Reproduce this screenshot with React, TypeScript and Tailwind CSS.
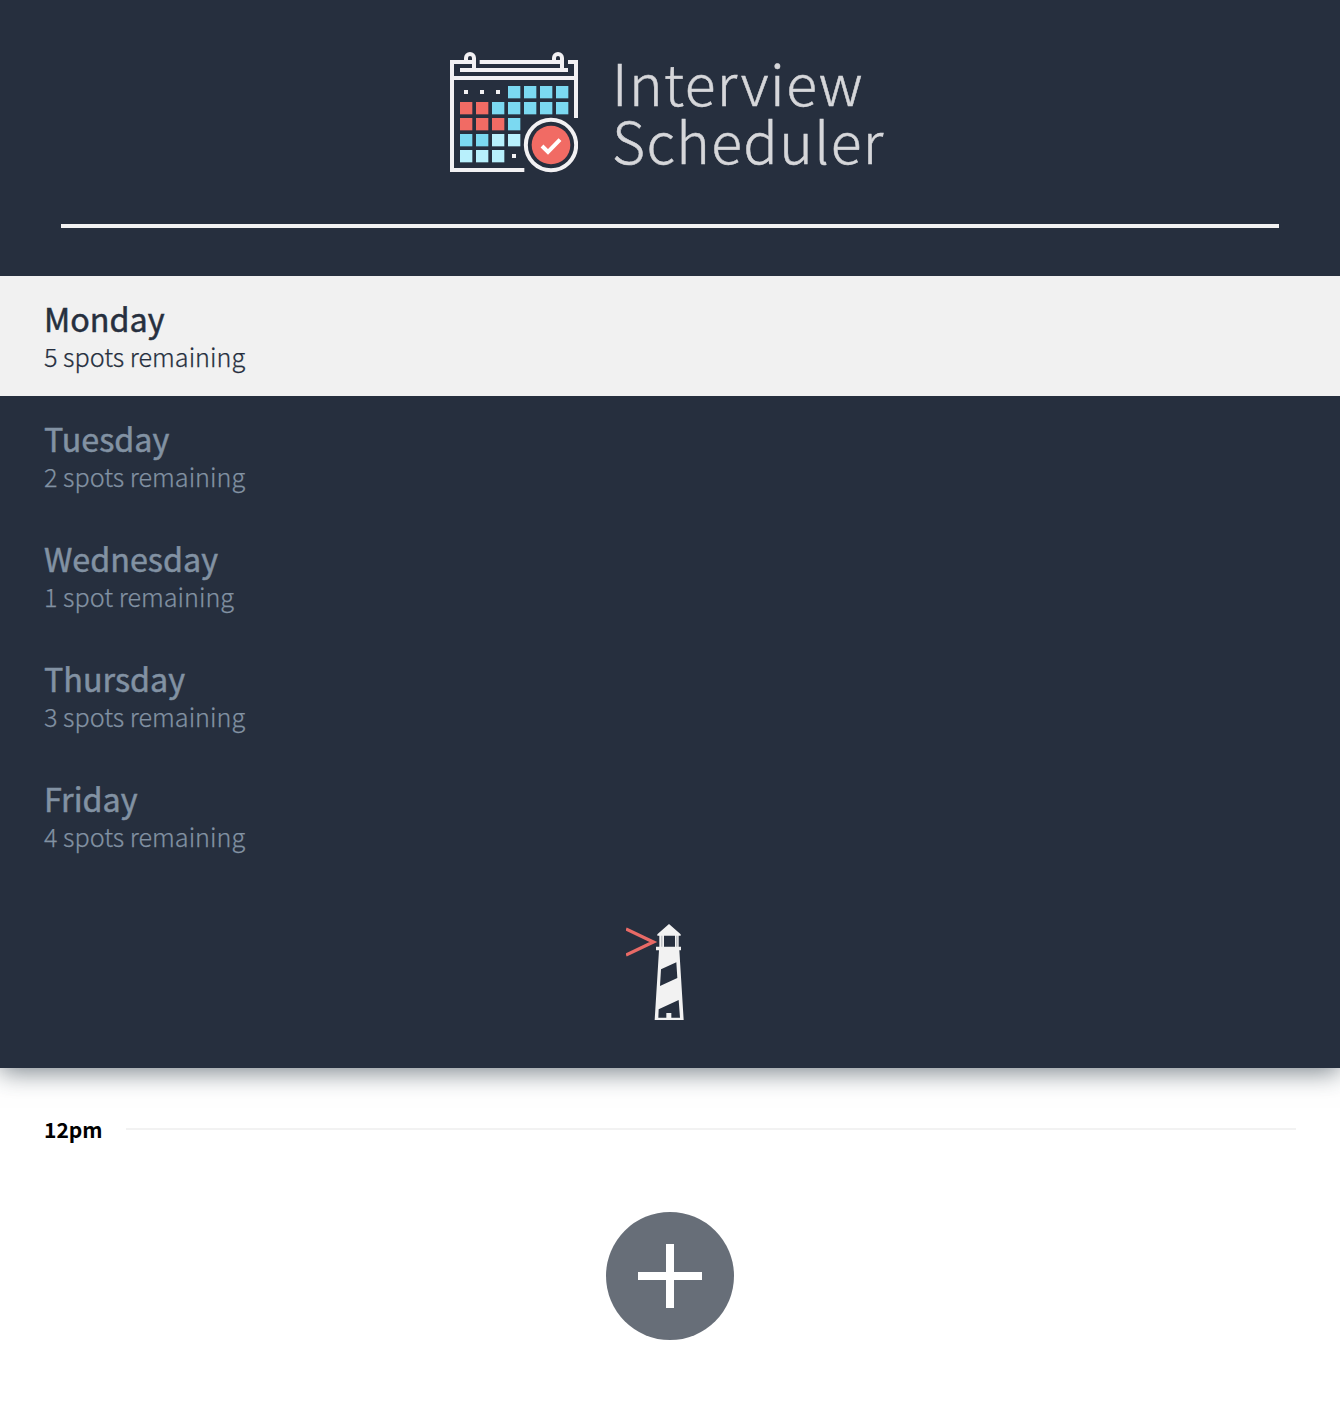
import React from "react";

const squares: [number, number, string][] = [
  [3, 0, "#7bd9f1"], [4, 0, "#7bd9f1"], [5, 0, "#7bd9f1"], [6, 0, "#7bd9f1"],
  [0, 1, "#f16b64"], [1, 1, "#f16b64"], [2, 1, "#7bd9f1"], [3, 1, "#7bd9f1"], [4, 1, "#7bd9f1"], [5, 1, "#7bd9f1"], [6, 1, "#7bd9f1"],
  [0, 2, "#f16b64"], [1, 2, "#f16b64"], [2, 2, "#f16b64"], [3, 2, "#7bd9f1"],
  [0, 3, "#7bd9f1"], [1, 3, "#7bd9f1"], [2, 3, "#b8f0fc"], [3, 3, "#b8f0fc"],
  [0, 4, "#b8f0fc"], [1, 4, "#b8f0fc"], [2, 4, "#b8f0fc"],
];

function CalendarIcon() {
  return (
    <svg className="h-[121px] w-32 shrink-0" viewBox="30 36 384 363" fill="none">
      <g stroke="#f2f1f3" strokeWidth="12">
        <path d="M98 66H36V390H253" />
        <path d="M384 66H408V234" />
        <path d="M36 114H408" />
        <path d="M60 90H384" />
        <path d="M119 66H362" />
        <path d="M78 66V54A12 12 0 0 1 102 54V90" />
        <path d="M342 66V54A12 12 0 0 1 366 54V90" />
      </g>
      {squares.map(([c, r, fill]) => (
        <rect key={`${c}-${r}`} x={60 + c * 48} y={138 + r * 48} width="37" height="37" fill={fill} />
      ))}
      <g fill="#f2f1f3">
        <rect x="72" y="150" width="12" height="12" />
        <rect x="120" y="150" width="12" height="12" />
        <rect x="168" y="150" width="12" height="12" />
        <rect x="216" y="342" width="12" height="12" />
      </g>
      <circle cx="333" cy="315" r="75.500" stroke="#f2f1f3" strokeWidth="12" />
      <circle cx="333" cy="315" r="58" fill="#f16b64" />
      <path d="M306 318L324 336L360 299" stroke="#fff" strokeWidth="12" />
    </svg>
  );
}

function Lighthouse() {
  return (
    <svg className="h-24 w-[58px]" viewBox="48 42 174 288">
      <path d="M48 57L130 96L48 135" fill="none" stroke="#e86a66" strokeWidth="10" />
      <path fill="#f2f2f2" d="M177 42L212 73V77H206V110H213V121H208L221 330H134L147 121H138V110H148V77H142V73Z" />
      <path fill="#262f3e" d="M162 77H195V110H162ZM153 178L199 157L202 204L150 228ZM146 298L206 270L210 323H184V309H169V323H145Z" />
      <path fill="#262f3e" fillOpacity="0.35" d="M154 77H157V110H154ZM199 77H202V110H199Z" />
    </svg>
  );
}

const days = [
  ["Monday", "5 spots remaining"],
  ["Tuesday", "2 spots remaining"],
  ["Wednesday", "1 spot remaining"],
  ["Thursday", "3 spots remaining"],
  ["Friday", "4 spots remaining"],
];

export default function App() {
  return (
    <main className="min-h-[1414px] overflow-hidden bg-white font-['Noto_Sans_CJK_SC','Noto_Sans',sans-serif]">
      <section className="flex h-[1068px] flex-col items-center bg-[#262f3e] shadow-[0_4px_24px_rgba(32,46,58,0.6)]">
        <header className="flex h-[224px] w-full items-start gap-[34px] pt-[52px] pl-[450px]">
          <CalendarIcon />
          <h1 className="text-[57px] leading-[58px] font-light tracking-[1.4px] text-[#d6d7da] [-webkit-text-stroke:0.5px_#d6d7da]">
            Interview
            <br />
            Scheduler
          </h1>
        </header>
        <hr className="h-1 w-[1218px] border-0 bg-[#f2f2f2]" />
        <ul className="mt-12 w-full">
          {days.map(([name, spots], i) => (
            <li
              key={name}
              className={`flex h-[120px] flex-col px-11 pt-[22px] ${i === 0 ? "bg-[#f1f1f1] text-[#262f3e]" : "text-[#8292a3]"}`}
            >
              <h2 className="text-[32.3px] leading-10 font-normal [-webkit-text-stroke:0.5px_currentColor]">{name}</h2>
              <h3 className="text-[25.2px] leading-9 font-light [-webkit-text-stroke:0.25px_currentColor]">{spots}</h3>
            </li>
          ))}
        </ul>
        <div className="mt-12 mr-[30px]">
          <Lighthouse />
        </div>
      </section>
      <section className="flex flex-col px-11">
        <header className="flex h-[122px] items-center gap-6">
          <h4 className="w-[58px] text-[21px] leading-6 font-bold whitespace-nowrap">12pm</h4>
          <hr className="h-0.5 grow border-0 bg-[#f2f2f2]" />
        </header>
        <button aria-label="Add" className="mt-[22px] self-center">
          <svg className="size-32" viewBox="0 0 128 128">
            <circle cx="64" cy="64" r="64" fill="#676e78" />
            <path d="M60 32h8v28h28v8h-28v28h-8v-28h-28v-8h28z" fill="#fff" />
          </svg>
        </button>
      </section>
    </main>
  );
}
